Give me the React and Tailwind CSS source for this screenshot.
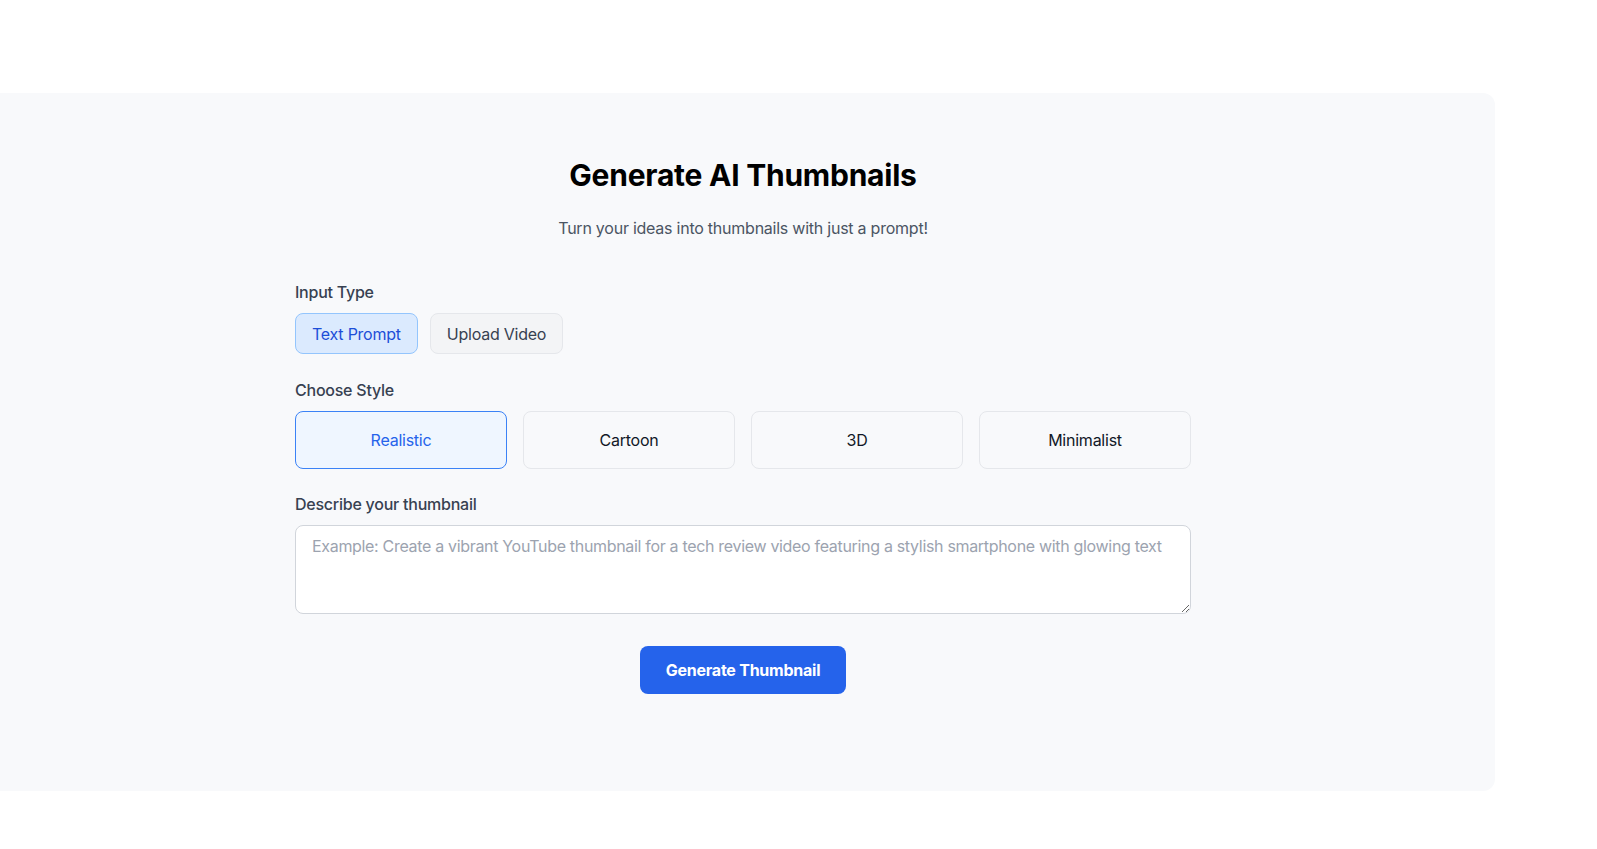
import { useState } from "react";

const styles = ["Realistic", "Cartoon", "3D", "Minimalist"];

export default function App() {
  const [inputType, setInputType] = useState("text");
  const [style, setStyle] = useState("Realistic");
  const [prompt, setPrompt] = useState("");

  return (
    <div className="min-h-screen bg-white pt-[93px] font-['Inter',sans-serif] tracking-[-0.015em]">
      <div className="w-[1495px] rounded-r-xl bg-[#f8f9fb] pr-[9px] pt-[64px] pb-[97px]">
        <div className="mx-auto w-[896px]">
          <h1 className="text-center text-3xl font-bold text-black">Generate AI Thumbnails</h1>
          <p className="mt-[23px] text-center text-base text-[#4b5563]">
            Turn your ideas into thumbnails with just a prompt!
          </p>

          <div className="mt-10">
            <label className="block text-base font-medium text-[#374151]">Input Type</label>
            <div className="mt-[9px] flex gap-3">
              <button
                onClick={() => setInputType("text")}
                className={
                  inputType === "text"
                    ? "h-[41px] rounded-lg border border-[#93c5fd] bg-[#dbeafe] px-4 text-base text-[#1d4ed8]"
                    : "h-[41px] rounded-lg border border-[#e5e7eb] bg-[#f3f4f6] px-4 text-base text-[#374151]"
                }
              >
                Text Prompt
              </button>
              <button
                onClick={() => setInputType("video")}
                className={
                  inputType === "video"
                    ? "h-[41px] rounded-lg border border-[#93c5fd] bg-[#dbeafe] px-4 text-base text-[#1d4ed8]"
                    : "h-[41px] rounded-lg border border-[#e5e7eb] bg-[#f3f4f6] px-4 text-base text-[#374151]"
                }
              >
                Upload Video
              </button>
            </div>
          </div>

          <div className="mt-6">
            <label className="block text-base font-medium text-[#374151]">Choose Style</label>
            <div className="mt-[9px] grid grid-cols-4 gap-4">
              {styles.map((s) => (
                <button
                  key={s}
                  onClick={() => setStyle(s)}
                  className={
                    style === s
                      ? "h-[58px] rounded-lg border border-[#3b82f6] bg-[#eff6ff] text-base text-[#2563eb]"
                      : "h-[58px] rounded-lg border border-[#e5e7eb] bg-[#f8f9fb] text-base text-[#111827]"
                  }
                >
                  {s}
                </button>
              ))}
            </div>
          </div>

          <div className="mt-[23px]">
            <label className="block text-base font-medium text-[#374151]">Describe your thumbnail</label>
            <textarea
              value={prompt}
              onChange={(e) => setPrompt(e.target.value)}
              placeholder="Example: Create a vibrant YouTube thumbnail for a tech review video featuring a stylish smartphone with glowing text"
              className="mt-[9px] block h-[89px] w-full rounded-lg border border-[#d1d5db] bg-white px-4 py-2 text-base tracking-[-0.02em] text-[#1f2937] placeholder-[#9ca3af] outline-none"
            />
          </div>

          <div className="mt-8 flex justify-center">
            <button className="h-[48px] rounded-lg bg-[#2563eb] px-[26px] text-base font-bold text-white">
              Generate Thumbnail
            </button>
          </div>
        </div>
      </div>
    </div>
  );
}
